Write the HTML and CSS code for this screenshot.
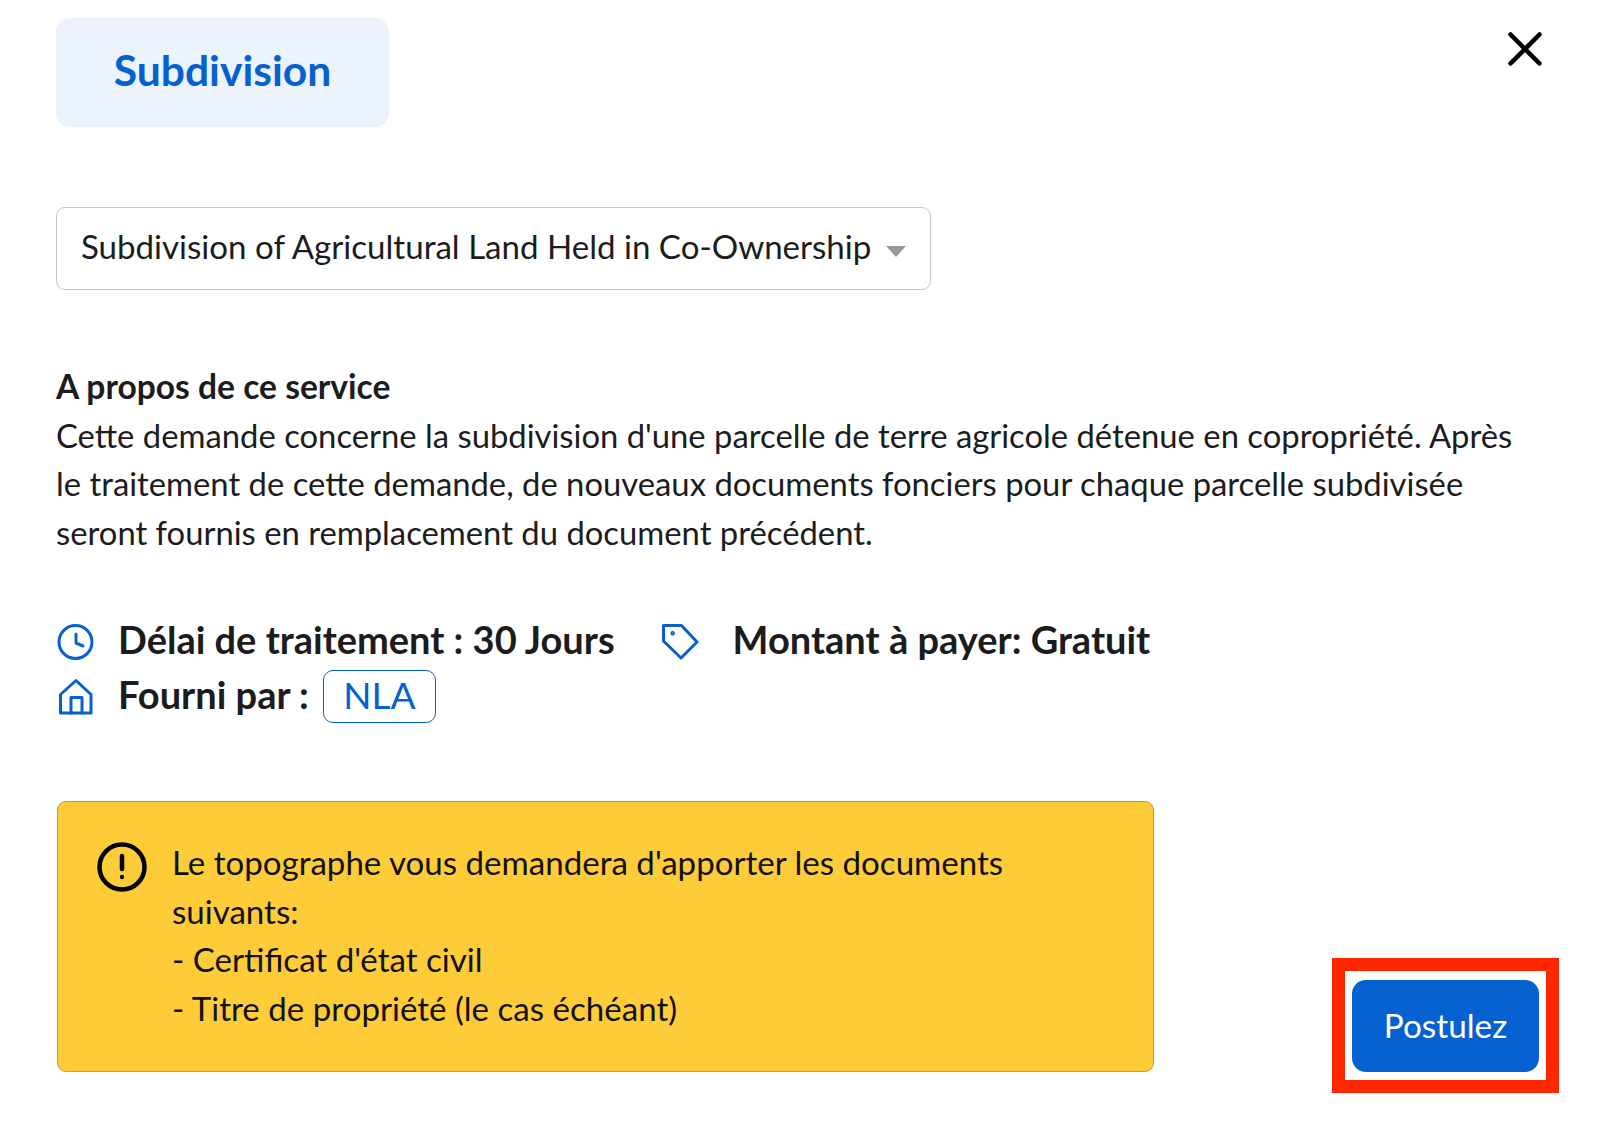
FILE: index.html
```html
<!DOCTYPE html>
<html lang="fr">
<head>
  <meta charset="UTF-8">
  <meta name="viewport" content="width=device-width, initial-scale=1.0">
  <title>Subdivision</title>
  <link rel="stylesheet" href="styles.css">
</head>
<body>
  <div class="modal">
    <div class="top-row">
      <div class="tag-box">Subdivision</div>
      <button class="close-btn" aria-label="Fermer">
        <svg width="34" height="34" viewBox="0 0 34 34" fill="none" stroke="#000" stroke-width="4.500" stroke-linecap="round"><path d="M2.500 2.500 31.500 31.500M31.500 2.500 2.500 31.500"/></svg>
      </button>
    </div>

    <div class="select-box">
      <span class="select-text">Subdivision of Agricultural Land Held in Co-Ownership</span>
      <span class="caret"></span>
    </div>

    <div class="about">
      <strong>A propos de ce service</strong><br>
      Cette demande concerne la subdivision d'une parcelle de terre agricole détenue en copropriété. Après le traitement de cette demande, de nouveaux documents fonciers pour chaque parcelle subdivisée seront fournis en remplacement du document précédent.
    </div>

    <div class="facts">
      <div class="fact-row">
        <svg class="icon" viewBox="0 0 38 38" fill="none" stroke="#0461cf" stroke-width="3" stroke-linecap="round" stroke-linejoin="round"><circle cx="19.500" cy="19" r="16.500"/><path d="M20 11V20L27 23"/></svg>
        <span class="fact-text">Délai de traitement : 30 Jours</span>
        <svg class="icon tag-icon" viewBox="0 0 38 38" fill="none" stroke="#0461cf" stroke-width="3" stroke-linecap="round" stroke-linejoin="round"><path d="M2.500 2.500H20.500L36 19 20 35 2.500 18Z"/><circle cx="11.700" cy="10.300" r=".8" fill="#0461cf"/></svg>
        <span class="fact-text">Montant à payer: Gratuit</span>
      </div>
      <div class="fact-row">
        <svg class="icon" viewBox="0 0 38 38" fill="none" stroke="#0461cf" stroke-width="3" stroke-linecap="round" stroke-linejoin="round"><path d="M4.500 16.500 20 2.500 35 16.500V35H4.500Z"/><path d="M15 35V19.500H26V35"/></svg>
        <span class="fact-text">Fourni par :</span>
        <span class="pill">NLA</span>
      </div>
    </div>

    <div class="bottom-row">
      <div class="notice">
        <svg class="notice-icon" viewBox="0 0 50 50" fill="none" stroke="#000" stroke-width="4.500" stroke-linecap="round"><circle cx="25" cy="25" r="22.500"/><path d="M25 14V27"/><circle cx="25" cy="35" r="1.200" fill="#000" stroke-width="2"/></svg>
        <p>Le topographe vous demandera d'apporter les documents suivants:<br>- Certificat d'état civil<br>- Titre de propriété (le cas échéant)</p>
      </div>
      <div class="highlight">
        <button class="apply-btn">Postulez</button>
      </div>
    </div>
  </div>
</body>
</html>
```

FILE: styles.css
```css
* {
  box-sizing: border-box;
}
body {
  margin: 0;
  background: #fff;
  color: #1c1c1c;
  font-family: "Lato", "Open Sans", sans-serif;
  font-size: 32.800px;
  line-height: 48.500px;
}
.modal {
  padding: 18px 41px 34px 56px;
}
.top-row {
  display: flex;
  justify-content: space-between;
  align-items: flex-start;
}
.tag-box {
  width: 333px;
  height: 109px;
  padding-bottom: 4px;
  background: #ecf3fd;
  border-radius: 14px;
  color: #0461cf;
  font-size: 42.600px;
  font-weight: 700;
  display: flex;
  align-items: center;
  justify-content: center;
}
.close-btn {
  background: none;
  border: none;
  padding: 0;
  margin: 14px 17px 0 0;
  width: 34px;
  height: 34px;
}
.select-box {
  width: 875px;
  height: 83px;
  margin-top: 80px;
  border: 1.500px solid #c8c8c8;
  border-radius: 9px;
  padding: 0 24px 0 24px;
  display: flex;
  align-items: center;
  justify-content: space-between;
}
.select-text {
  font-size: 33.100px;
  padding-bottom: 4px;
}
.caret {
  width: 0;
  height: 0;
  border-left: 10.500px solid transparent;
  border-right: 10.500px solid transparent;
  border-top: 11px solid #999;
  margin-top: 5px;
}
.about {
  margin-top: 72px;
  width: 1480px;
}
.about strong {
  font-size: 33.600px;
}
.facts {
  margin-top: 57px;
  font-size: 38px;
  font-weight: 700;
}
.fact-row {
  display: flex;
  align-items: center;
  height: 55px;
}
.fact-text {
  padding-bottom: 4px;
}
.icon {
  width: 38px;
  height: 38px;
  margin-right: 24px;
  flex-shrink: 0;
}
.tag-icon {
  margin-left: 46px;
  margin-right: 34px;
}
.pill {
  margin-left: 14px;
  width: 113px;
  height: 53px;
  padding-bottom: 2px;
  border: 1.500px solid #0461cf;
  border-radius: 10px;
  color: #0461cf;
  font-size: 37px;
  font-weight: 400;
  display: flex;
  align-items: center;
  justify-content: center;
}
.bottom-row {
  margin-top: 77px;
  display: flex;
  justify-content: space-between;
  align-items: flex-start;
}
.notice {
  width: 1097px;
  height: 271px;
  margin-left: 1px;
  background: #ffcc39;
  border: 1.500px solid #dd9420;
  border-radius: 9px;
  padding: 36px 40px 0 39px;
  display: flex;
  gap: 25px;
  color: #111;
  font-size: 33.100px;
}
.notice-icon {
  width: 50px;
  height: 50px;
  flex-shrink: 0;
  margin-top: 4px;
}
.notice p {
  margin: 0;
}
.highlight {
  border: 13px solid #ff2600;
  padding: 9px 7px 8px;
  margin-top: 157px;
}
.apply-btn {
  display: block;
  width: 187px;
  height: 92px;
  padding: 0 0 2px;
  background: #0461cf;
  color: #fff;
  border: none;
  border-radius: 14px;
  font-family: inherit;
  font-size: 33.300px;
}
```
